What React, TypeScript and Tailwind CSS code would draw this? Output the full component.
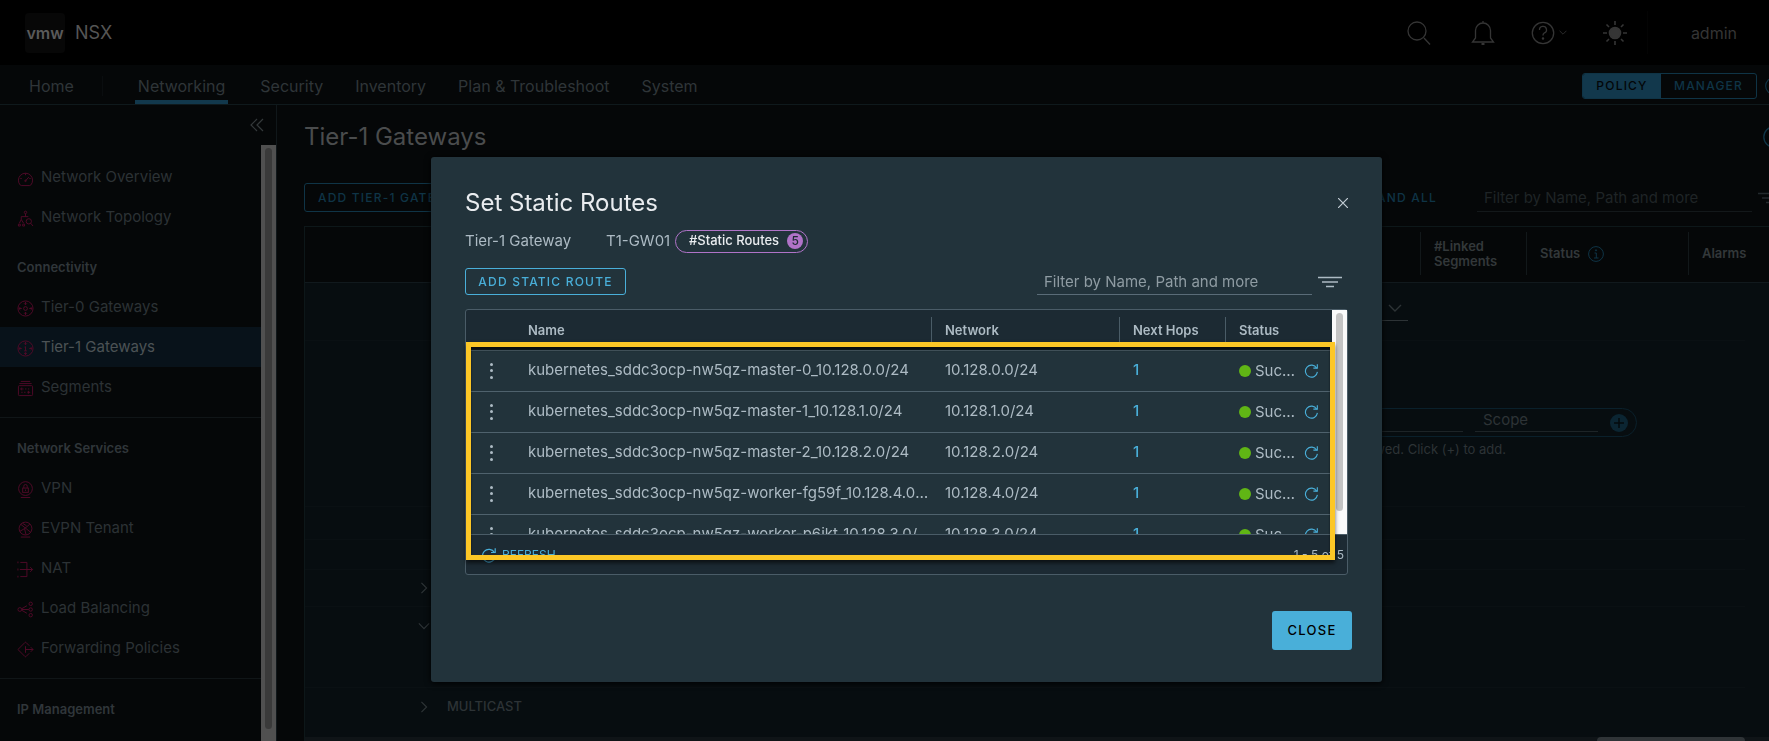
import type { ReactNode } from "react"

const sidebarSections = [
  { title: "", items: ["Network Overview", "Network Topology"] },
  { title: "Connectivity", items: ["Tier-0 Gateways", "Tier-1 Gateways", "Segments"] },
  {
    title: "Network Services",
    items: ["VPN", "EVPN Tenant", "NAT", "Load Balancing", "Forwarding Policies"],
  },
  { title: "IP Management", items: [] },
]

const routes = [
  { name: "kubernetes_sddc3ocp-nw5qz-master-0_10.128.0.0/24", network: "10.128.0.0/24" },
  { name: "kubernetes_sddc3ocp-nw5qz-master-1_10.128.1.0/24", network: "10.128.1.0/24" },
  { name: "kubernetes_sddc3ocp-nw5qz-master-2_10.128.2.0/24", network: "10.128.2.0/24" },
  { name: "kubernetes_sddc3ocp-nw5qz-worker-fg59f_10.128.4.0/24", network: "10.128.4.0/24" },
  { name: "kubernetes_sddc3ocp-nw5qz-worker-p6jkt_10.128.3.0/24", network: "10.128.3.0/24" },
]

const icons: Record<string, ReactNode> = {
  "Network Overview": (
    <>
      <path d="M3.5 16A7.5 7.5 0 1 1 14.500 16Q14 16.500 13.500 16.500H4.500Q4 16.500 3.500 16Z" />
      <path d="M9 3.500V5.500M3.500 9H5M13 9H14.500M9 11.500L12.500 7.500" />
      <circle cx="9" cy="11.500" r="0.8" />
    </>
  ),
  "Network Topology": (
    <>
      <circle cx="9" cy="2.500" r="1.300" />
      <path d="M9 4V7M4.500 10V7H12M4.500 10L2.500 14M4.500 10L7 14M1.500 15H3.500V17H1.500ZM6 15H8V17H6Z" />
      <circle cx="12.500" cy="12" r="2.800" />
      <path d="M14.500 14L17 17" />
    </>
  ),
  "Tier-0 Gateways": (
    <>
      <circle cx="9" cy="9" r="8" />
      <circle cx="9" cy="9" r="2" />
      <path d="M9 2V5M7.500 3.500L9 5L10.500 3.500M9 16V13M7.500 14.500L9 13L10.500 14.500M2 9H5M3.500 7.500L2 9L3.500 10.500M16 9H13M14.500 7.500L16 9L14.500 10.500" />
    </>
  ),
  "Tier-1 Gateways": (
    <>
      <circle cx="9" cy="9" r="8" />
      <path d="M8 7.500L9 7V11.500M7.500 11.500H10.500M9 2V5M7.500 3.500L9 5L10.500 3.500M9 16V13.500M7.500 14.500L9 13.500L10.500 14.500M2 9H5M3.500 7.500L2 9L3.500 10.500M16 9H13M14.500 7.500L16 9L14.500 10.500" />
    </>
  ),
  Segments: (
    <>
      <path d="M4 1.500H14M2.500 3.800H15.500" />
      <rect x="1.500" y="6" width="15" height="10.500" rx="1" />
      <path d="M4 9.500H7M5 8L4 9.500L5 11M8.500 9.500H10M11.500 9.500H13M4.500 13H6M7.500 13H9M11 13H14M12 11.500V14.500" />
    </>
  ),
  VPN: (
    <>
      <circle cx="9" cy="8" r="7.300" />
      <rect x="6" y="7.500" width="6" height="4.500" />
      <path d="M7.200 7.500V5.500A1.800 1.800 0 0 1 10.800 5.500V7.500M9 9V10.500M4 17.500H14" />
    </>
  ),
  "EVPN Tenant": (
    <>
      <circle cx="9" cy="8" r="6.800" />
      <path d="M4 3.500L14.500 12M13.500 3.500L8 8L3 11M8 8L9.500 14.500M6 2.500L10 5M4 17H14" />
    </>
  ),
  NAT: (
    <>
      <path d="M3.500 1.500H10.500V16.500H3.500M3 9H16.500M14 6.500L16.500 9L14 11.500" />
      <path d="M0.500 1.500H1.500M0.500 9H1.500M0.500 16.500H1.500" strokeWidth="2" />
    </>
  ),
  "Load Balancing": (
    <>
      <circle cx="3" cy="9" r="2" />
      <circle cx="14.500" cy="3" r="1.800" />
      <circle cx="14.500" cy="9" r="1.800" />
      <circle cx="14.500" cy="15" r="1.800" />
      <path d="M5 9H12.500M5 8.200L10.500 5M5 9.800L10.500 13" />
    </>
  ),
  "Forwarding Policies": (
    <>
      <path d="M13 5L9.500 1.500Q9 1 8.500 1.500L1.500 8.500Q1 9 1.500 9.500L8.500 16.500Q9 17 9.500 16.500L13 13" />
      <path d="M9 5.500V12.500M9 9H17M14.500 6.500L17 9L14.500 11.500" />
    </>
  ),
}

function Chevron({ className }: { className?: string }) {
  return (
    <svg viewBox="0 0 14 8" className={className} fill="none" stroke="currentColor" strokeWidth="1.400">
      <path d="M1 1L7 7L13 1" />
    </svg>
  )
}

function FilterIcon({ className }: { className?: string }) {
  return (
    <svg viewBox="0 0 24 12" className={className} fill="none" stroke="currentColor" strokeWidth="1.500">
      <path d="M0 1.500H24M4 6H20M8 10.500H16" />
    </svg>
  )
}

function RefreshIcon({ className }: { className?: string }) {
  return (
    <svg viewBox="0 0 16 16" className={className} fill="none" stroke="currentColor" strokeWidth="1.200">
      <path d="M13.500 5.500A6.400 6.400 0 1 0 14.300 9.500" />
      <path d="M10 5.500H14.200V1.200" />
    </svg>
  )
}

function InfoIcon({ className }: { className?: string }) {
  return (
    <svg viewBox="0 0 16 16" className={className} fill="none" stroke="currentColor">
      <circle cx="8" cy="8" r="7.400" />
      <path d="M6.500 7H8.300V12M6 12H10.500" />
      <circle cx="8" cy="4.300" r="0.600" fill="currentColor" />
    </svg>
  )
}

function Header() {
  return (
    <header className="flex h-[65px] shrink-0 items-center bg-black pl-[25px] pr-8 text-[#353535]">
      <div className="flex h-10 w-10 items-center justify-center rounded bg-[#070707] text-base font-semibold text-[#5a5a5a]">
        vmw
      </div>
      <span className="ml-[10px] text-lg text-[#555]">NSX</span>
      <div className="ml-auto flex items-center">
        <button aria-label="Search">
          <svg viewBox="0 0 24 24" className="h-6 w-6" fill="none" stroke="currentColor" strokeWidth="1.300">
            <circle cx="10" cy="10" r="9" />
            <path d="M17 17L23 23.500" />
          </svg>
        </button>
        <button aria-label="Notifications" className="ml-10">
          <svg viewBox="0 0 24 24" className="h-6 w-6" fill="none" stroke="currentColor" strokeWidth="1.300">
            <path d="M1.500 21H22.500L19.500 17V9.500A7.500 7.500 0 0 0 4.500 9.500V17ZM12 0V2" />
            <path d="M10.500 23H13.500" strokeWidth="2" />
          </svg>
        </button>
        <button aria-label="Help" className="ml-9 flex items-center gap-1">
          <svg viewBox="0 0 24 24" className="h-6 w-6" fill="none" stroke="currentColor" strokeWidth="1.300">
            <circle cx="12" cy="12" r="10.700" />
            <path d="M8.500 9A3.500 3.500 0 1 1 13 12.200Q12 12.800 12 14.500" />
            <circle cx="12" cy="17.500" r="0.600" fill="currentColor" />
          </svg>
          <Chevron className="h-[5px] w-2" />
        </button>
        <button aria-label="Theme" className="ml-9">
          <svg viewBox="0 0 24 24" className="h-6 w-6" fill="none" stroke="currentColor" strokeWidth="1.600">
            <circle cx="12" cy="12" r="5.500" fill="currentColor" />
            <path d="M12 0V4M12 20V24M0 12H4M20 12H24M3.500 3.500L6 6M18 18L20.500 20.500M3.500 20.500L6 18M18 6L20.500 3.500" />
          </svg>
        </button>
        <span className="ml-5 h-[43px] w-px bg-[#040404]" />
        <button className="ml-[43px] text-base">admin</button>
      </div>
    </header>
  )
}

function NavBar() {
  return (
    <nav className="flex h-10 shrink-0 items-center overflow-hidden border-b border-[#0f191c] pl-[29px] pt-0.5 text-base text-[#2f3538]">
      <a href="#home">Home</a>
      <span className="ml-7 h-5 w-px bg-[#0a0d0f]" />
      <div className="ml-8 flex h-full items-center gap-8">
        <a href="#networking" className="flex h-full items-center border-b-4 border-[#12384c] px-[3px] pt-1">
          Networking
        </a>
        <a href="#security">Security</a>
        <a href="#inventory">Inventory</a>
        <a href="#plan">Plan &amp; Troubleshoot</a>
        <a href="#system">System</a>
      </div>
      <div className="ml-auto flex shrink-0 overflow-hidden rounded-[3px] border border-[#0f3446] text-xs font-medium tracking-widest">
        <button className="h-6 w-[78px] bg-[#12384c] text-[#030608]">POLICY</button>
        <button className="h-6 w-[95px] text-[#0f3446]">MANAGER</button>
      </div>
      <InfoIcon className="-mr-[14px] ml-2 h-[18px] w-[18px] shrink-0 text-[#0f3446]" />
    </nav>
  )
}

function Sidebar() {
  return (
    <aside className="flex w-[277px] shrink-0 flex-col border-r border-[#10171a]">
      <div className="flex h-10 shrink-0 items-center justify-end pr-3">
        <button aria-label="Collapse navigation" className="text-[#34393b]">
          <svg viewBox="0 0 14 14" className="h-[14px] w-[14px]" fill="none" stroke="currentColor" strokeWidth="1.200">
            <path d="M7 1L1 7L7 13M13 1L7 7L13 13" />
          </svg>
        </button>
      </div>
      <div className="flex min-h-0 flex-1">
        <div className="min-w-0 flex-1 overflow-hidden pt-3">
          {sidebarSections.map((section, index) => (
            <div
              key={section.title}
              className={index < 2 ? "" : "mt-[10px] border-t border-[#101517]"}
            >
              {section.title && (
                <h2 className="flex h-[50px] items-center pl-[17px] pt-3 text-[13px] font-semibold text-[#30363a]">
                  {section.title}
                </h2>
              )}
              {section.items.map((item) => (
                <a
                  key={item}
                  href="#nav"
                  className={
                    item === "Tier-1 Gateways"
                      ? "flex h-10 items-center bg-[#08121a] pl-[17px] text-[15px] text-[#4c5255]"
                      : "flex h-10 items-center pl-[17px] text-[15px] text-[#2c3235]"
                  }
                >
                  <svg
                    viewBox="0 0 18 18"
                    className="mr-[7px] mt-0.5 h-[17px] w-[17px]"
                    fill="none"
                    stroke="#520a28"
                    strokeWidth="1"
                  >
                    {icons[item]}
                  </svg>
                  {item}
                </a>
              ))}
            </div>
          ))}
        </div>
        <div className="w-[15px] shrink-0 bg-[#505050] px-1 pb-3 pt-[3px]">
          <div className="h-full rounded-full bg-[#3a3a3a]" />
        </div>
      </div>
    </aside>
  )
}

function GatewaysPage() {
  return (
    <main className="flex min-w-0 flex-1 flex-col overflow-hidden pl-[27px]">
      <div className="flex h-16 shrink-0 items-center justify-between">
        <h1 className="text-2xl text-[#4a4c4d]">Tier-1 Gateways</h1>
        <InfoIcon className="-mr-4 h-[22px] w-[22px] shrink-0 text-[#0f3446]" />
      </div>
      <div className="mt-[14px] flex h-[29px] shrink-0 items-center">
        <button className="h-[29px] rounded-[3px] border border-[#0f3446] px-[13px] text-xs font-medium tracking-widest text-[#0f3446]">
          ADD TIER-1 GATEWAY
        </button>
        <button className="ml-auto text-xs font-medium tracking-widest text-[#0f3446]">EXPAND ALL</button>
        <input
          aria-label="Filter gateways"
          placeholder="Filter by Name, Path and more"
          className="ml-10 h-7 w-[275px] border-b border-[#13181a] bg-transparent pl-[7px] text-[15px] placeholder:text-[#1f2426]"
        />
        <FilterIcon className="-mr-[13px] ml-[6px] h-3 w-6 shrink-0 text-[#23292c]" />
      </div>
      <section className="mt-[14px] flex min-h-0 flex-1 flex-col border-l border-t border-[#0d1719]">
        <div className="flex h-14 shrink-0 items-center justify-end border-b border-[#11191d] pb-0.5 text-[13px] font-semibold leading-[15px] text-[#33383a]">
          <div className="flex h-[43px] w-[106px] items-center border-l border-[#12181a] pl-[13px]">
            #Linked Segments
          </div>
          <div className="flex h-[43px] w-[162px] items-center border-l border-[#12181a] pl-[13px]">
            Status
            <InfoIcon className="ml-2 h-4 w-4 text-[#0f3446]" />
          </div>
          <div className="flex h-[43px] w-[81px] items-center border-l border-[#12181a] pl-[13px]">Alarms</div>
        </div>
        <div className="flex-1 bg-[#070d10] pr-6 text-[#2d3336]">
          <div className="flex h-[58px] items-start justify-end border-b border-[#0a1013] pr-[337px] pt-3">
            <div className="flex h-[26px] w-40 items-center border-b border-[#2d3336] pr-[6px]">
              <select aria-label="Tier-0 gateway" className="flex-1 appearance-none bg-transparent" />
              <Chevron className="h-2 w-[14px]" />
            </div>
          </div>
          <div className="flex h-[166px] flex-col items-end border-b border-[#0a1013] pt-[67px]">
            <div className="mr-[108px] flex h-[29px] items-center rounded-full border border-[#0a202b] pl-4 pr-2">
              <input
                aria-label="Tag"
                placeholder="Tag"
                className="h-[18px] w-[122px] border-b border-[#1d2427] bg-transparent pl-2 text-[15px] placeholder:text-[#262c2f]"
              />
              <input
                aria-label="Scope"
                placeholder="Scope"
                className="ml-3 h-[18px] w-[123px] border-b border-[#1d2427] bg-transparent pb-1 pl-2 text-[15px] placeholder:text-[#2d3336]"
              />
              <button
                aria-label="Add tag"
                className="ml-3 flex h-[18px] w-[18px] items-center justify-center rounded-full bg-[#0b2532]"
              >
                <svg viewBox="0 0 10 10" className="h-[10px] w-[10px]" stroke="#050a0d" strokeWidth="1.500">
                  <path d="M5 0V10M0 5H10" />
                </svg>
              </button>
            </div>
            <p className="mr-[239px] mt-[3px] text-[13px]">allowed. Click (+) to add.</p>
          </div>
          <div className="h-[33px] border-b border-[#0a1013]" />
          <div className="h-[30px] border-b border-[#0a1013]" />
          <div className="flex h-[37px] items-center border-b border-[#0a1013] pl-[113px] text-[13px] font-medium">
            <Chevron className="mr-5 h-2 w-3 -rotate-90" />
          </div>
          <div className="h-[81px] border-b border-[#0a1013] pl-[113px] text-[13px] font-medium">
            <div className="flex h-[37px] items-center">
              <Chevron className="mr-5 h-2 w-3" />
            </div>
          </div>
          <div className="flex h-[37px] items-center pl-[113px] text-[13px] font-medium">
            <Chevron className="mr-[17px] h-2 w-3 -rotate-90" />
            MULTICAST
          </div>
        </div>
        <div className="flex h-1 shrink-0 justify-end bg-[#0f1417] pr-6">
          <div className="w-[148px] rounded-t bg-[#2f3437]" />
        </div>
      </section>
    </main>
  )
}

function RoutesTable() {
  return (
    <div className="relative mt-[14px] rounded-[3px] border border-[#4a5c67] bg-[#1c2a33]">
      <div className="flex h-56 overflow-hidden">
        <div className="min-w-0 flex-1">
          <table className="w-full table-fixed border-collapse text-left text-[15px] leading-5 text-[#adbbc4]">
            <colgroup>
              <col className="w-[49px]" />
              <col />
              <col className="w-[188px]" />
              <col className="w-[106px]" />
              <col className="w-[107px]" />
            </colgroup>
            <thead>
              <tr className="h-10 text-[13px]">
                <th aria-label="Actions" />
                <th className="pl-[13px] font-semibold">Name</th>
                <th className="p-0 font-semibold">
                  <div className="flex h-[26px] items-center border-l border-[#4a5c67] pl-[13px]">Network</div>
                </th>
                <th className="p-0 font-semibold">
                  <div className="flex h-[26px] items-center border-l border-[#4a5c67] pl-[13px]">Next Hops</div>
                </th>
                <th className="p-0 font-semibold">
                  <div className="flex h-[26px] items-center border-l border-[#4a5c67] pl-[13px]">Status</div>
                </th>
              </tr>
            </thead>
            <tbody>
              {routes.map((route) => (
                <tr key={route.name} className="h-[41px] border-t border-[#4f626d] bg-[#22333b]">
                  <td className="pl-6">
                    <button aria-label="Row actions" className="flex h-4 w-1 flex-col justify-between">
                      <span className="h-[3px] w-[3px] rounded-full bg-[#adbbc4]" />
                      <span className="h-[3px] w-[3px] rounded-full bg-[#adbbc4]" />
                      <span className="h-[3px] w-[3px] rounded-full bg-[#adbbc4]" />
                    </button>
                  </td>
                  <td className="truncate pb-0.5 pl-[13px]">{route.name}</td>
                  <td className="pb-0.5 pl-[14px]">{route.network}</td>
                  <td className="pb-0.5 pl-[14px]">
                    <a href="#hops" className="font-medium text-[#49afd9]">1</a>
                  </td>
                  <td className="pl-[14px]">
                    <div className="flex items-center">
                      <span className="h-3 w-3 shrink-0 rounded-full bg-[#60b515]" />
                      <span className="ml-1 w-[43px] truncate">Success</span>
                      <button aria-label="Refresh status" className="ml-[6px] text-[#49afd9]">
                        <RefreshIcon className="h-[15px] w-[15px]" />
                      </button>
                    </div>
                  </td>
                </tr>
              ))}
            </tbody>
          </table>
        </div>
        <div className="w-[15px] shrink-0 bg-[#fafafa] px-1 pb-[23px] pt-[3px]">
          <div className="h-full rounded-full bg-[#c4c4c4]" />
        </div>
      </div>
      <div className="flex h-10 items-center justify-between border-t border-[#4a5c67] pl-[15px] pr-[3px] text-xs">
        <button className="flex items-center gap-[5px] text-[#49afd9]">
          <RefreshIcon className="h-4 w-4" />
          REFRESH
        </button>
        <span className="text-[#adbbc4]">1 - 5 of 5</span>
      </div>
      {/* Highlight frame around the route rows */}
      <div className="pointer-events-none absolute bottom-[14px] left-0 right-3 top-8 border-[5px] border-[#fcc726] shadow-[0_3px_4px_rgba(0,0,0,0.6),inset_0_3px_2px_rgba(0,0,0,0.7)]" />
    </div>
  )
}

function StaticRoutesDialog() {
  return (
    <div className="fixed inset-0 flex items-start justify-center pl-11 pt-[157px]">
      <div
        role="dialog"
        aria-labelledby="dialog-title"
        className="w-full max-w-[951px] rounded-[3px] bg-[#22333b] px-[34px] pb-8 pt-7 shadow-[0_1px_6px_#000]"
      >
        <div className="flex h-9 items-center justify-between">
          <h2 id="dialog-title" className="text-2xl text-[#e9ecef]">Set Static Routes</h2>
          <button aria-label="Close dialog" className="text-[#c3ced5]">
            <svg viewBox="0 0 10 10" className="h-[10px] w-[10px]" stroke="currentColor" strokeWidth="1.200">
              <path d="M0 0L10 10M10 0L0 10" />
            </svg>
          </button>
        </div>
        <div className="mt-[6px] flex h-7 items-center text-[15px] text-[#adbbc4]">
          <span className="w-[141px]">Tier-1 Gateway</span>
          <span className="w-[69px]">T1-GW01</span>
          <span className="flex h-[23px] items-center gap-2 rounded-full border border-[#b073c8] pl-[13px] pr-1 text-[13px] font-medium text-[#e9ecef]">
            #Static Routes
            <span className="flex h-4 w-4 items-center justify-center rounded-full bg-[#b073c8] text-xs text-[#1b2a32]">
              5
            </span>
          </span>
        </div>
        <div className="mt-[13px] flex h-[27px] items-center justify-between">
          <button className="h-[27px] w-[161px] rounded-[3px] border border-[#49afd9] text-xs font-medium tracking-widest text-[#49afd9]">
            ADD STATIC ROUTE
          </button>
          <div className="flex items-center gap-[6px] pr-[6px]">
            <input
              aria-label="Filter static routes"
              placeholder="Filter by Name, Path and more"
              className="h-[27px] w-[275px] border-b border-[#5a6c78] bg-transparent pl-[7px] text-[15px] placeholder:text-[#8f9ca3]"
            />
            <button aria-label="Filter options" className="text-[#adbbc4]">
              <FilterIcon className="h-3 w-6" />
            </button>
          </div>
        </div>
        <RoutesTable />
        <div className="-mr-1 mt-9 flex justify-end">
          <button className="h-[39px] w-20 rounded-[3px] bg-[#49afd9] text-[13px] font-medium tracking-widest text-black">
            CLOSE
          </button>
        </div>
      </div>
    </div>
  )
}

export default function App() {
  return (
    <div className="flex h-screen flex-col overflow-hidden bg-[#050708] font-['Inter','Noto_Sans',sans-serif]">
      <Header />
      <NavBar />
      <div className="flex min-h-0 flex-1">
        <Sidebar />
        <GatewaysPage />
      </div>
      <StaticRoutesDialog />
    </div>
  )
}
